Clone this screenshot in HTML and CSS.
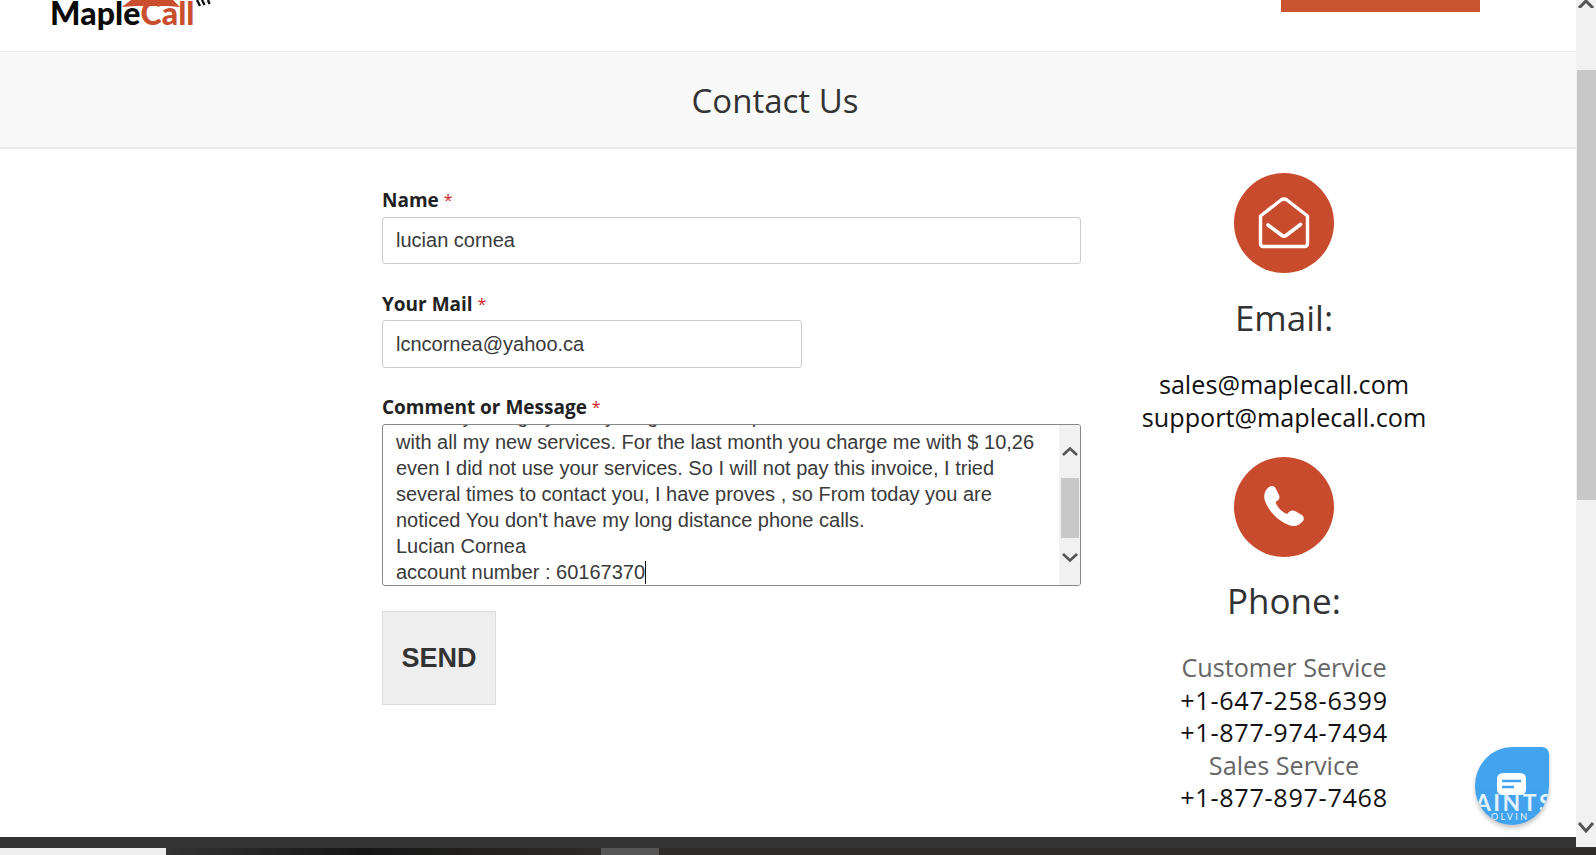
FILE: index.html
```html
<!DOCTYPE html>
<html lang="en">
<head>
<meta charset="utf-8">
<title>Contact Us - MapleCall</title>
<link rel="stylesheet" href="styles.css">
</head>
<body>
<div class="window">
  <div class="upper">
    <div class="page">
      <div class="page-main">
        <header class="site-header">
          <a class="logo">
            <svg class="logo-roof" width="60" height="8" viewBox="0 0 60 8"><polygon points="0,7 9,0 51,0 58,7 46,6 14,6" fill="#c94f2e"/></svg>
            <span class="logo-black">Maple</span><span class="logo-red">Call</span>
            <svg class="logo-signal" width="18" height="8" viewBox="0 0 18 8"><path d="M2 0 L5 6 M7 0 L9.5 5 M13 0 L14.5 4" stroke="#111" stroke-width="2.4" fill="none"/></svg>
          </a>
          <div class="header-btn"></div>
        </header>
        <div class="title-band"><h1 class="title">Contact Us</h1></div>
        <div class="content">
          <form class="form">
            <label class="label">Name <span class="req">*</span></label>
            <div class="input input-full">lucian cornea</div>
            <label class="label label-next">Your Mail <span class="req">*</span></label>
            <div class="input input-mail">lcncornea@yahoo.ca</div>
            <label class="label label-next label-comment">Comment or Message <span class="req">*</span></label>
            <div class="textarea">
              <div class="textarea-text">
                <div>and they charge you anything for a new plan</div>
                <div>with all my new services. For the last month you charge me with $ 10,26</div>
                <div>even I did not use your services. So I will not pay this invoice, I tried</div>
                <div>several times to contact you, I have proves , so From today you are</div>
                <div>noticed You don't have my long distance phone calls.</div>
                <div>Lucian Cornea</div>
                <div>account number : 60167370<span class="caret"></span></div>
              </div>
              <div class="ta-scroll">
                <svg class="ta-arrow" width="18" height="11" viewBox="0 0 18 11"><path d="M2 9 L9 2.5 L16 9" stroke="#555" stroke-width="2.6" fill="none"/></svg>
                <div class="ta-thumb"></div>
                <svg class="ta-arrow" width="18" height="11" viewBox="0 0 18 11"><path d="M2 2 L9 8.5 L16 2" stroke="#555" stroke-width="2.6" fill="none"/></svg>
              </div>
            </div>
            <button class="send" type="button">SEND</button>
          </form>
          <aside class="info">
            <div class="circle">
              <svg width="100" height="100" viewBox="0 0 100 100"><path d="M26.5 43 L47 27 Q50 25 53 27 L73.5 43 V71 a2.5 2.5 0 0 1-2.5 2.5 H29 a2.5 2.5 0 0 1-2.5-2.5Z" fill="none" stroke="#fff" stroke-width="3.4" stroke-linejoin="round"/><path d="M34 52 L48 62.5 Q50 64 52 62.5 L66.5 51.5" fill="none" stroke="#fff" stroke-width="3.6" stroke-linecap="round"/></svg>
            </div>
            <h2 class="info-head">Email:</h2>
            <div class="info-lines info-lines-email">
              <div class="dark">sales@maplecall.com</div>
              <div class="dark">support@maplecall.com</div>
            </div>
            <div class="circle">
              <svg width="100" height="100" viewBox="0 0 100 100"><path d="M35 30 C38 28 41 29 42 32 L45 38 C46 41 45 43 43 44 L41.5 45 C43 50 48 55 53 57 L55 55 C56.5 53.5 59 53 61 54 L67 57.5 C70 59 70.5 62 69 64 C66 68 61 70 56 68.5 C45 65 35 55 31 44 C29 38 31 33 35 30Z" fill="#fff"/></svg>
            </div>
            <h2 class="info-head info-head-phone">Phone:</h2>
            <div class="info-lines info-lines-phone">
              <div class="muted">Customer Service</div>
              <div class="dark number">+1-647-258-6399</div>
              <div class="dark number">+1-877-974-7494</div>
              <div class="muted">Sales Service</div>
              <div class="dark number">+1-877-897-7468</div>
            </div>
          </aside>
        </div>
        <div class="chat">
          <svg width="30" height="24" viewBox="0 0 30 24"><path d="M7 0 H23 Q29 0 29 6 V16 Q29 22 23 22 H6 Q0 22 0 16 V6 Q0 0 7 0Z" fill="#fff"/><path d="M5 8 H24 M5 14 H17" stroke="#42a3ee" stroke-width="2.4" fill="none"/></svg>
          <span class="mark-big">AINTS</span>
          <span class="mark-small">OLVIN</span>
        </div>
      </div>
      <div class="dark-strip"></div>
    </div>
    <div class="scrollbar">
      <svg class="sb-up" width="20" height="8" viewBox="0 0 20 8"><path d="M3 8 L10 1 L17 8" stroke="#555" stroke-width="3" fill="none"/></svg>
      <div class="sb-thumb"></div>
      <svg class="sb-down" width="20" height="12" viewBox="0 0 20 12"><path d="M3 2 L10 10 L17 2" stroke="#555" stroke-width="3" fill="none"/></svg>
    </div>
  </div>
  <div class="taskbar">
    <div class="tb-light"></div>
    <div class="tb-dark"></div>
    <div class="tb-grey"></div>
    <div class="tb-rest"></div>
  </div>
</div>
</body>
</html>
```
FILE: styles.css
```css
* { box-sizing: border-box; }
html, body { margin: 0; padding: 0; background: #fff; }
.window { width: 1596px; height: 855px; display: flex; flex-direction: column; overflow: hidden; background: #333; }
.upper { display: flex; height: 847px; flex: none; }
.page { flex: 1; min-width: 0; display: flex; flex-direction: column; }
.page-main { height: 837px; position: relative; overflow: hidden; background: #fff; }
.dark-strip { height: 10px; background: #333; }

.site-header { height: 52px; display: flex; justify-content: space-between; align-items: flex-start; padding: 0 96px 0 50px; border-bottom: 1px solid #eee; }
.logo { position: relative; display: block; margin-top: -5px; font: 900 32px/36px Lato, sans-serif; letter-spacing: .1px; white-space: nowrap; }
.logo-black { color: #0a0a0a; }
.logo-red { color: #c94f2e; }
.logo-roof { position: absolute; left: 72px; top: 5px; }
.logo-signal { position: absolute; left: 145px; top: 5px; }
.header-btn { width: 199px; height: 12px; background: #c9542f; }

.title-band { height: 97px; background: #f9f9f9; border-bottom: 2px solid #e8e8e8; display: flex; align-items: center; justify-content: center; padding: 3px 26px 0 0; }
.title { margin: 0; font: 400 33px/44px "Open Sans", sans-serif; color: #333; }

.content { display: flex; padding-left: 382px; }
.form { width: 699px; padding-top: 39px; display: flex; flex-direction: column; align-items: flex-start; }
.label { height: 29px; font: 700 19px/24px "Open Sans", sans-serif; color: #222; display: block; }
.label-next { margin-top: 26px; height: 30px; line-height: 28px; }
.label-comment { line-height: 26px; }
.req { color: #d2232a; font-weight: 400; font-size: 16px; vertical-align: 1px; }
.input { height: 47px; padding: 0 13px; border: 1px solid #ccc; border-radius: 3px; font: 20px/45px "Liberation Sans", sans-serif; color: #3a3a3a; background: #fff; }
.input-full { width: 699px; }
.input-mail { width: 420px; height: 48px; line-height: 46px; }
.textarea { width: 699px; height: 162px; border: 1px solid #888; border-radius: 3px; display: flex; overflow: hidden; background: #fff; }
.textarea-text { flex: 1; min-width: 0; padding: 0 13px; font: 20px/26px "Liberation Sans", sans-serif; color: #3a3a3a; display: flex; flex-direction: column; justify-content: flex-end; white-space: nowrap; }
.caret { display: inline-block; width: 1px; height: 23px; background: #111; vertical-align: -5px; }
.ta-scroll { width: 21px; flex: none; background: #f1f1f1; display: flex; flex-direction: column; align-items: center; padding: 21px 0 0; }
.ta-arrow { flex: none; }
.ta-thumb { width: 18px; height: 60px; margin: 21px 0 14px; background: #c8c8c8; }
.send { margin-top: 25px; width: 114px; height: 94px; padding: 0; background: #eee; border: 1px solid #ddd; font: 700 27px/1 "Liberation Sans", sans-serif; color: #333; }

.info { width: 308px; margin-left: 49px; padding-top: 24px; display: flex; flex-direction: column; align-items: center; text-align: center; }
.circle { width: 100px; height: 100px; border-radius: 50%; background: #c94b2d; flex: none; }
.circle svg { display: block; }
.info-head { margin: 23px 0 0; font: 400 35px/44px "Open Sans", sans-serif; color: #333; }
.info-head-phone { margin-top: 22px; }
.info-lines { font: 400 25.2px/33px "Open Sans", sans-serif; white-space: nowrap; }
.info-lines-email { margin-top: 28px; margin-bottom: 23px; }
.info-lines-phone { margin-top: 28px; line-height: 32.5px; }
.number { letter-spacing: .7px; }
.dark { color: #111; }
.muted { color: #666; }

.chat { position: absolute; left: 1475px; top: 747px; width: 74px; height: 78px; border-radius: 50% 7px 50% 50%; background: #42a3ee; box-shadow: 0 3px 4px rgba(90,90,90,.35); display: flex; flex-direction: column; align-items: center; padding-top: 26px; overflow: hidden; }
.chat svg { flex: none; margin-left: -1px; }
.mark-big { position: absolute; left: 0; top: 43px; font: 700 23px/24px Lato, sans-serif; letter-spacing: 2.4px; color: #fff; opacity: .85; }
.mark-small { position: absolute; left: 16px; top: 65px; font: 400 9px/10px Lato, sans-serif; letter-spacing: 2.4px; color: #fff; opacity: .9; }

.scrollbar { width: 20px; flex: none; background: #f1f1f1; display: flex; flex-direction: column; align-items: center; }
.sb-up { flex: none; }
.sb-thumb { width: 19px; height: 430px; margin-top: 62px; margin-left: 1px; background: #c8c8c8; }
.sb-down { flex: none; margin-top: auto; margin-bottom: 14px; }

.taskbar { height: 8px; flex: none; display: flex; padding-top: 1px; background: #333; }
.tb-light { width: 166px; background: #eee; }
.tb-dark { width: 435px; background: linear-gradient(90deg, #333, #161616 45%, #2e2c2a); }
.tb-grey { width: 58px; background: #555; }
.tb-rest { flex: 1; background: #2e2c2a; }
```
